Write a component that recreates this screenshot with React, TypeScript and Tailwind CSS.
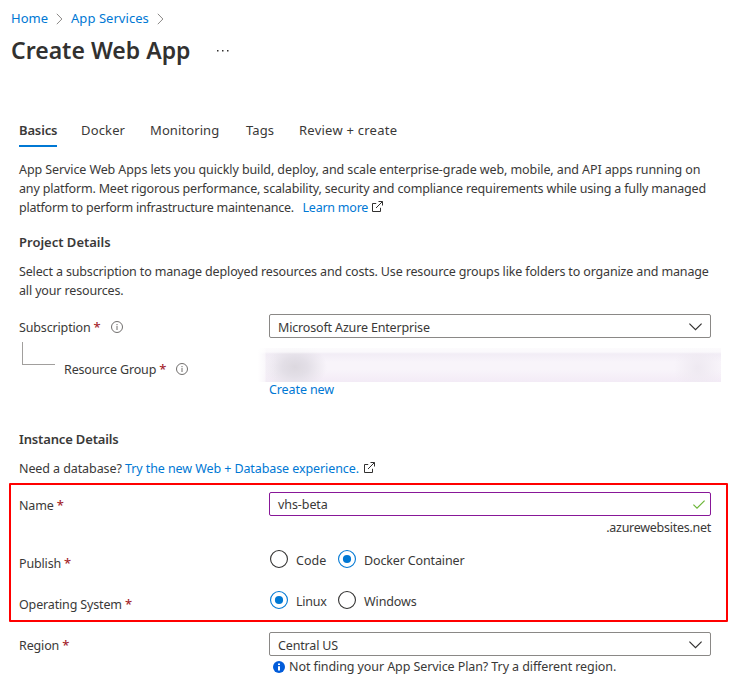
import type { ReactNode } from 'react';

const Chevron = () => (
  <svg width="7" height="12" viewBox="0 0 7 12" fill="none" stroke="#8a8886" strokeWidth="1" className="shrink-0">
    <path d="M0.8 0.8L5.9 6L0.8 11.2" />
  </svg>
);

const External = () => (
  <svg width="11" height="11" viewBox="0 0 11 11" fill="none" stroke="#323130" strokeWidth="1" className="-mt-[3px] shrink-0">
    <path d="M4.2 2.5H0.5V10.5H8.5V6.8M6.5 0.5H10.5V4.5M10.3 0.7L4 7" />
  </svg>
);

const Info = () => (
  <svg width="12" height="12" viewBox="0 0 12 12" fill="none" stroke="#605e5c" strokeWidth="0.9" className="-mt-px shrink-0">
    <circle cx="6" cy="6" r="5.5" />
    <path d="M6 5V9M6 3V4.2" />
  </svg>
);

const Caret = () => (
  <svg width="13" height="8" viewBox="0 0 13 8" fill="none" stroke="#323130" strokeWidth="1.15" className="mt-0.5 shrink-0">
    <path d="M0.4 0.6L6.5 6.7L12.6 0.6" />
  </svg>
);

const Check = () => (
  <svg width="12" height="9" viewBox="0 0 12 9" fill="none" stroke="#6bb536" strokeWidth="1.2" className="shrink-0">
    <path d="M0.4 4.6L4 8.1L11.6 0.6" />
  </svg>
);

const Radio = ({ on }: { on?: boolean }) => (
  <svg width="18" height="18" viewBox="0 0 18 18" fill="none" className="shrink-0">
    <circle cx="9" cy="9" r="8.45" stroke={on ? '#0078d4' : '#323130'} strokeWidth="1.1" />
    {on && <circle cx="9" cy="9" r="4.1" fill="#0078d4" />}
  </svg>
);

const Label = ({ children }: { children: ReactNode }) => (
  <span className="flex gap-[3px] tracking-[-0.15px]">
    <span>{children}</span>
    <span className="text-[13px] font-medium text-[#a4262c]">*</span>
  </span>
);

const Select = ({ children }: { children: ReactNode }) => (
  <div className="flex h-6 w-[442px] items-center justify-between rounded-xs border border-[#8a8886] pr-[8px] pl-2">
    <span className="pt-0.5 tracking-[-0.16px]">{children}</span>
    <Caret />
  </div>
);

export default function App() {
  return (
    <div className="h-[692px] w-[736px] overflow-hidden bg-white font-['Noto_Sans',sans-serif] text-[12.5px] leading-[19px] whitespace-nowrap text-[#3a3938]">
      <nav className="flex h-[37px] items-center gap-2 pl-[11px] text-[13px] text-[#0078d4]">
        <span>Home</span>
        <Chevron />
        <span className="tracking-[0.05px]">App Services</span>
        <Chevron />
      </nav>
      <header className="flex h-[30px] items-center pl-[11px]">
        <h1 className="-mt-[3px] w-[206px] text-[23px] font-semibold text-[#323130]">Create Web App</h1>
        <svg width="12" height="2" viewBox="0 0 12 2" fill="#323130" className="-mt-0.5">
          <path d="M0 0h1.5v1.5H0zM5 0h1.5v1.5H5zM10 0h1.5v1.5H10z" />
        </svg>
      </header>
      <div className="mt-[51px] flex h-[29px] gap-6 pl-[19px] text-[13px]">
        <span className="w-[38px] border-b-2 border-[#0078d4] pt-[3px] font-semibold tracking-[-0.15px]">Basics</span>
        <span className="w-[45px] pt-[3px] tracking-[0.15px]">Docker</span>
        <span className="w-[72px] pt-[3px] tracking-[0.1px]">Monitoring</span>
        <span className="w-[29px] pt-[3px] tracking-[0.1px]">Tags</span>
        <span className="pt-[3px] tracking-[0.24px]">Review + create</span>
      </div>
      <main className="pl-[19px]">
        <div className="mt-[13px]">
          <p className="tracking-[-0.098px]">App Service Web Apps lets you quickly build, deploy, and scale enterprise-grade web, mobile, and API apps running on</p>
          <p className="tracking-[-0.172px]">any platform. Meet rigorous performance, scalability, security and compliance requirements while using a fully managed</p>
          <div className="flex items-center tracking-[-0.23px]">
            <span className="w-[283.5px]">platform to perform infrastructure maintenance.</span>
            <span className="w-[69.5px] text-[#0078d4]">Learn more</span>
            <External />
          </div>
        </div>
        <h2 className="mt-4 text-[13px] font-semibold">Project Details</h2>
        <div className="mt-[10px] tracking-[-0.145px]">
          <p>Select a subscription to manage deployed resources and costs. Use resource groups like folders to organize and manage</p>
          <p>all your resources.</p>
        </div>
        <div className="mt-[14px] flex h-6">
          <div className="flex w-[250px] items-center gap-[10px] pt-[3px]">
            <Label>Subscription</Label>
            <Info />
          </div>
          <Select>Microsoft Azure Enterprise</Select>
        </div>
        <div className="flex h-[61px]">
          <div className="flex w-[243px]">
            <div className="mt-1 ml-[3px] h-[23px] w-[33px] border-b border-l border-[#a19f9d]" />
            <div className="mt-[22px] ml-[9px] flex h-[19px] items-center gap-[10px]">
              <Label>Resource Group</Label>
              <Info />
            </div>
          </div>
          <div className="mt-[10px]">
            <div className="-ml-1 h-[34px] w-[463px] bg-[linear-gradient(to_right,#ffffff_0px,#ffffff88_7px,transparent_8px),linear-gradient(to_bottom,#ffffffcc_0px,#ffffffaa_4px,transparent_6px),linear-gradient(to_right,#f1ecf4aa,transparent_20px),radial-gradient(ellipse_32px_24px_at_37px_19px,#dcd8df_0%,#e3dfe7_40%,transparent_100%),radial-gradient(ellipse_24px_28px_at_440px_20px,#eee9f1_0%,transparent_100%),linear-gradient(to_bottom,#f1ecf5_5px,#f8f4fa_14px,#f8f4fa_22px,#f3ebf6_34px)]" />
            <div className="-mt-[2px] ml-[7px] tracking-[-0.1px] text-[#0078d4]">Create new</div>
          </div>
        </div>
        <h2 className="mt-[31px] text-[13px] font-semibold tracking-[-0.15px]">Instance Details</h2>
        <div className="mt-[10px] flex items-center tracking-[-0.09px]">
          <span className="w-[106px]">Need a database?</span>
          <span className="w-[239px] text-[#0078d4]">Try the new Web + Database experience.</span>
          <External />
        </div>
      </main>
      <section className="mt-[5px] ml-[9px] h-[139px] w-[719px] rounded-[1px] border-2 border-[#ff0000] pl-2">
        <div className="flex pt-[7px]">
          <div className="w-[250px] pt-1">
            <Label>Name</Label>
          </div>
          <div className="w-[442px]">
            <div className="flex h-6 items-center justify-between rounded-xs border border-[#881798] pr-[5px] pl-2">
              <span className="tracking-[-0.08px]">vhs-beta</span>
              <Check />
            </div>
            <div className="mt-[2px] text-right tracking-[-0.27px]">.azurewebsites.net</div>
          </div>
        </div>
        <div className="mt-[13px] flex h-[41px]">
          <div className="w-[251px] pt-[4px]">
            <Label>Publish</Label>
          </div>
          <div className="flex h-[18px] items-center">
            <Radio />
            <span className="ml-2 w-[42px] pt-[2px]">Code</span>
            <Radio on />
            <span className="ml-2 pt-[2px] tracking-[-0.14px]">Docker Container</span>
          </div>
        </div>
        <div className="flex h-[25px]">
          <div className="w-[251px] pt-[4px]">
            <Label>Operating System</Label>
          </div>
          <div className="flex h-[18px] items-center">
            <Radio on />
            <span className="ml-2 w-[42px] pt-[2px] tracking-[-0.25px]">Linux</span>
            <Radio />
            <span className="ml-2 pt-[2px] tracking-[-0.1px]">Windows</span>
          </div>
        </div>
      </section>
      <div className="mt-[10px] flex pl-[19px]">
        <div className="w-[250px] pt-[4px]">
          <Label>Region</Label>
        </div>
        <div>
          <Select>Central US</Select>
          <div className="mt-[1px] ml-1 flex items-center gap-1">
            <svg width="12" height="12" viewBox="0 0 12 12">
              <circle cx="6" cy="6" r="6" fill="#015cda" />
              <path d="M5 5.2h2v4.4H5zM5 2.4h2v1.7H5z" fill="white" />
            </svg>
            <span className="tracking-[-0.09px]">Not finding your App Service Plan? Try a different region.</span>
          </div>
        </div>
      </div>
    </div>
  );
}
